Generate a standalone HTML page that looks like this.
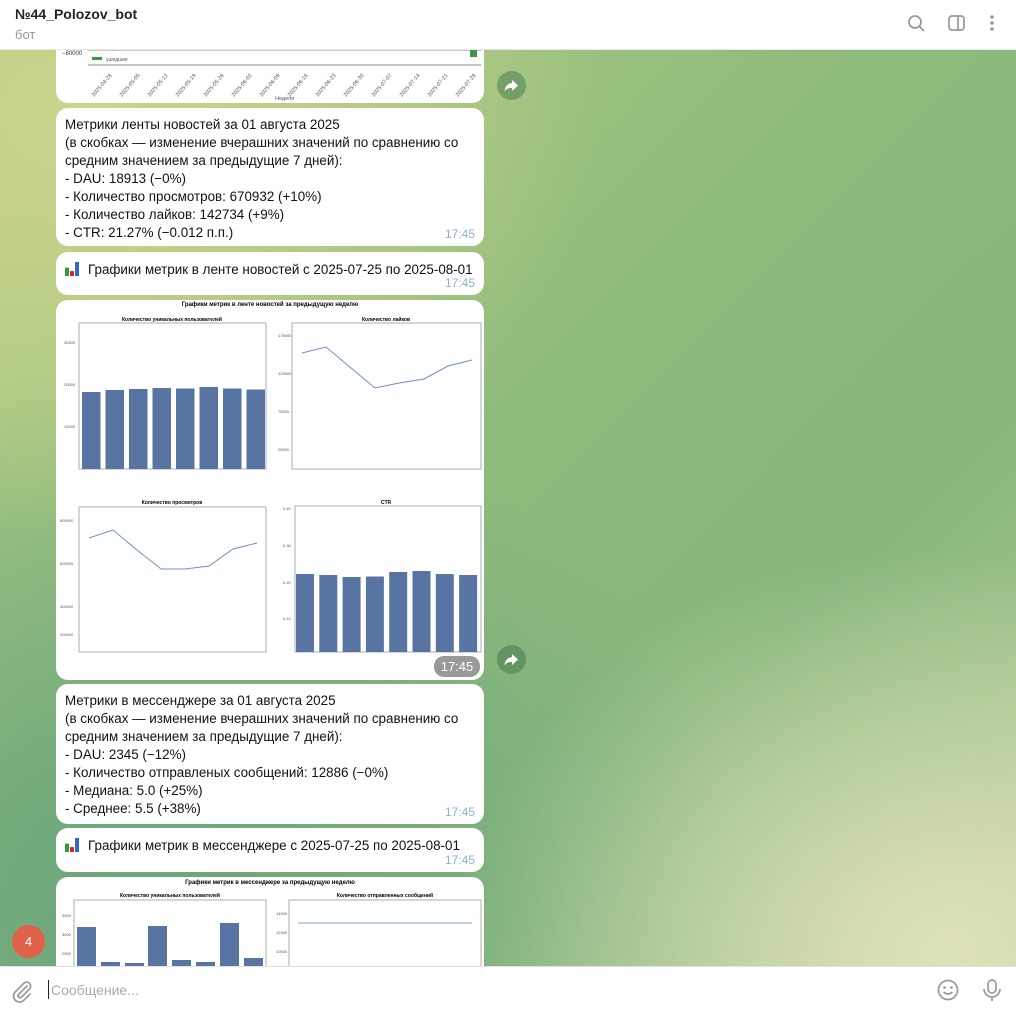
<!DOCTYPE html>
<html><head><meta charset="utf-8"><style>
*{margin:0;padding:0;box-sizing:border-box}
body{width:1016px;height:1011px;overflow:hidden;position:relative;font-family:"Liberation Sans","DejaVu Sans",sans-serif;
background:
radial-gradient(ellipse 520px 420px at 80px 120px,#cbd48c 0%,rgba(203,212,140,0) 100%),
radial-gradient(ellipse 500px 400px at 950px 950px,#dfe2b8 0%,rgba(223,226,184,0) 100%),
radial-gradient(ellipse 600px 500px at 150px 900px,#69a57c 0%,rgba(105,165,124,0) 100%),
linear-gradient(135deg,#b7cf86 0%,#8fbb7c 45%,#88b77c 70%,#b4cc98 100%);}
.hdr{position:absolute;left:0;top:0;width:1016px;height:50px;background:#fff;border-bottom:1px solid #e6e6e6;z-index:5}
.t1{position:absolute;left:15px;top:6px;font-size:14px;font-weight:bold;color:#222}
.t2{position:absolute;left:15px;top:27px;font-size:13px;color:#999}
.b{position:absolute;left:56px;width:428px;background:#fff;border-radius:12px;font-size:13.4px;color:#111;line-height:18px;overflow:hidden}
.tx{padding:8px 10px 0 9px;white-space:nowrap}
.tm{position:absolute;right:9px;bottom:3px;font-size:12px;color:#8fb0c8}
.fw{position:absolute;left:497px;width:29px;height:29px;border-radius:50%;background:rgba(60,110,70,.45)}
.inp{position:absolute;left:0;top:966px;width:1016px;height:45px;background:#fff;border-top:1px solid #e2e2e2;z-index:5}
.ic{display:inline-block;width:14px;height:14px;vertical-align:-2px;margin-right:9px;background:linear-gradient(90deg,#2aa039 0 4px,transparent 4px 5px,#d22 5px 9px,transparent 9px 10px,#2a6ad2 10px);clip-path:polygon(0 40%,33% 40%,33% 65%,66% 65%,66% 0,100% 0,100% 100%,0 100%)}
</style></head><body>
<div class="hdr"><div class="t1">№44_Polozov_bot</div><div class="t2">бот</div>
<svg style="position:absolute;left:900px;top:10px" width="110" height="30" viewBox="900 10 110 30">
<circle cx="915" cy="22" r="6" fill="none" stroke="#999" stroke-width="1.8"/><line x1="919.5" y1="26.5" x2="924" y2="31" stroke="#999" stroke-width="1.8"/>
<rect x="949" y="16" width="15" height="14" rx="3" fill="none" stroke="#999" stroke-width="1.7"/><line x1="958" y1="16" x2="958" y2="30" stroke="#999" stroke-width="1.7"/>
<circle cx="992" cy="17" r="1.8" fill="#999"/><circle cx="992" cy="23" r="1.8" fill="#999"/><circle cx="992" cy="29" r="1.8" fill="#999"/>
</svg></div>

<div class="b" style="top:40px;height:63px">
<svg width="428" height="63" viewBox="56 40 428 63">
<rect x="88" y="40" width="393" height="10" fill="none" stroke="#999" stroke-width="1"/>
<text x="62" y="55" font-size="6" fill="#333">−80000</text>
<rect x="92" y="46" width="10" height="3" fill="#f0883a"/><text x="106" y="50" font-size="5" fill="#555">старые</text>
<rect x="92" y="57" width="10" height="3" fill="#3a9a40"/><text x="106" y="61" font-size="5" fill="#555">ушедшие</text>
<rect x="470" y="50" width="7" height="7" fill="#3a9a40"/>
<line x1="88" y1="65" x2="481" y2="65" stroke="#888"/>
<g font-size="5.5" fill="#555">
<text transform="translate(94,97) rotate(-50)">2025-04-28</text><text transform="translate(122,97) rotate(-50)">2025-05-05</text><text transform="translate(150,97) rotate(-50)">2025-05-12</text><text transform="translate(178,97) rotate(-50)">2025-05-19</text><text transform="translate(206,97) rotate(-50)">2025-05-26</text><text transform="translate(234,97) rotate(-50)">2025-06-02</text><text transform="translate(262,97) rotate(-50)">2025-06-09</text><text transform="translate(290,97) rotate(-50)">2025-06-16</text><text transform="translate(318,97) rotate(-50)">2025-06-23</text><text transform="translate(346,97) rotate(-50)">2025-06-30</text><text transform="translate(374,97) rotate(-50)">2025-07-07</text><text transform="translate(402,97) rotate(-50)">2025-07-14</text><text transform="translate(430,97) rotate(-50)">2025-07-21</text><text transform="translate(458,97) rotate(-50)">2025-07-28</text>
<text x="275" y="100">Неделя</text></g></svg></div>
<div class="fw" style="top:71px"><svg width="29" height="29" viewBox="0 0 29 29"><path d="M15 9 L21 14.5 L15 20 V17 C11 17 9 18 7.5 20.5 C8 15.5 10.5 12.5 15 12 Z" fill="#fff"/></svg></div>

<div class="b" style="top:108px;height:138px"><div class="tx">Метрики ленты новостей за 01 августа 2025<br>(в скобках — изменение вчерашних значений по сравнению со<br>средним значением за предыдущие 7 дней):<br>- DAU: 18913 (−0%)<br>- Количество просмотров: 670932 (+10%)<br>- Количество лайков: 142734 (+9%)<br>- CTR: 21.27% (−0.012 п.п.)</div><div class="tm">17:45</div></div>

<div class="b" style="top:252px;height:43px"><div class="tx" style="padding-top:9px"><span class="ic"></span>Графики метрик в ленте новостей с 2025-07-25 по 2025-08-01</div><div class="tm">17:45</div></div>

<div class="b" style="top:300px;height:380px">
<svg width="428" height="380" viewBox="56 300 428 380">
<text x="270" y="306" font-size="6" font-weight="bold" text-anchor="middle">Графики метрик в ленте новостей за предыдущую неделю</text>
<g font-size="5" font-weight="bold" text-anchor="middle"><text x="172" y="321">Количество уникальных пользователей</text><text x="386" y="321">Количество лайков</text><text x="172" y="504">Количество просмотров</text><text x="386" y="504">CTR</text></g>
<g fill="none" stroke="#999" stroke-width=".8"><rect x="79" y="323" width="187" height="146"/><rect x="292" y="323" width="189" height="146"/><rect x="79" y="507" width="187" height="145"/><rect x="295" y="506" width="186" height="146"/></g>
<g fill="#5874a3"><rect x="82" y="392" width="18.5" height="77"/><rect x="105.5" y="390" width="18.5" height="79"/><rect x="129" y="389" width="18.5" height="80"/><rect x="152.5" y="388" width="18.5" height="81"/><rect x="176" y="388.5" width="18.5" height="80.5"/><rect x="199.5" y="387" width="18.5" height="82"/><rect x="223" y="388.5" width="18.5" height="80.5"/><rect x="246.5" y="389.5" width="18.5" height="79.5"/>
<rect x="296" y="574" width="18" height="78"/><rect x="319.3" y="575" width="18" height="77"/><rect x="342.6" y="577" width="18" height="75"/><rect x="365.9" y="576.5" width="18" height="75.5"/><rect x="389.2" y="572" width="18" height="80"/><rect x="412.5" y="571" width="18" height="81"/><rect x="435.8" y="574" width="18" height="78"/><rect x="459.1" y="575" width="18" height="77"/></g>
<polyline points="302,353 326,347 351,368 375,388 399,383 424,379 448,366 472,360" fill="none" stroke="#6f8fc8" stroke-width="1"/>
<polyline points="89,538 113,530 137,550 161,569 185,569 209,566 233,549 257,543" fill="none" stroke="#6f8fc8" stroke-width="1"/>
<g font-size="4" fill="#555"><text x="64" y="344">30000</text><text x="64" y="386">20000</text><text x="64" y="428">10000</text><text x="278" y="337">175000</text><text x="278" y="375">125000</text><text x="278" y="413">75000</text><text x="278" y="451">25000</text><text x="60" y="522">800000</text><text x="60" y="565">600000</text><text x="60" y="608">400000</text><text x="60" y="636">200000</text><text x="283" y="510">0.40</text><text x="283" y="547">0.30</text><text x="283" y="584">0.20</text><text x="283" y="620">0.10</text></g>
<rect x="434" y="656" width="46" height="21" rx="10" fill="rgba(0,0,0,.4)"/><text x="457" y="671" font-size="13" fill="#fff" text-anchor="middle">17:45</text>
</svg></div>
<div class="fw" style="top:645px"><svg width="29" height="29" viewBox="0 0 29 29"><path d="M15 9 L21 14.5 L15 20 V17 C11 17 9 18 7.5 20.5 C8 15.5 10.5 12.5 15 12 Z" fill="#fff"/></svg></div>

<div class="b" style="top:684px;height:140px"><div class="tx">Метрики в мессенджере за 01 августа 2025<br>(в скобках — изменение вчерашних значений по сравнению со<br>средним значением за предыдущие 7 дней):<br>- DAU: 2345 (−12%)<br>- Количество отправленых сообщений: 12886 (−0%)<br>- Медиана: 5.0 (+25%)<br>- Среднее: 5.5 (+38%)</div><div class="tm">17:45</div></div>

<div class="b" style="top:828px;height:44px"><div class="tx" style="padding-top:9px"><span class="ic"></span>Графики метрик в мессенджере с 2025-07-25 по 2025-08-01</div><div class="tm">17:45</div></div>

<div class="b" style="top:877px;height:110px">
<svg width="428" height="110" viewBox="56 877 428 110">
<text x="270" y="884" font-size="6" font-weight="bold" text-anchor="middle">Графики метрик в мессенджере за предыдущую неделю</text>
<g font-size="5" font-weight="bold" text-anchor="middle"><text x="170" y="897">Количество уникальных пользователей</text><text x="385" y="897">Количество отправленных сообщений</text></g>
<g fill="none" stroke="#999" stroke-width=".8"><rect x="74" y="900" width="192" height="90"/><rect x="289" y="900" width="192" height="90"/></g>
<g fill="#5874a3"><rect x="77" y="927" width="19" height="60"/><rect x="101" y="962" width="19" height="30"/><rect x="125" y="963" width="19" height="30"/><rect x="148" y="926" width="19" height="60"/><rect x="172" y="960" width="19" height="30"/><rect x="196" y="962" width="19" height="30"/><rect x="220" y="923" width="19" height="60"/><rect x="244" y="958" width="19" height="30"/></g>
<line x1="298" y1="923" x2="472" y2="923" stroke="#8aa0c8" stroke-width="1"/>
<g font-size="4" fill="#555"><text x="62" y="917">3500</text><text x="62" y="936">3000</text><text x="62" y="955">2500</text><text x="276" y="915">14000</text><text x="276" y="934">12000</text><text x="276" y="953">10000</text></g>
</svg></div>

<div style="position:absolute;left:12px;top:925px;width:33px;height:33px;border-radius:50%;background:#e2614a;color:#fff;font-size:13px;text-align:center;line-height:33px">4</div>

<div class="inp">
<svg style="position:absolute;left:10px;top:12px" width="24" height="24" viewBox="0 0 24 24"><path d="M17 7 L8.5 15.5 a2 2 0 0 0 2.8 2.8 L19.5 10 a4 4 0 0 0 -5.7 -5.7 L5.3 12.8 a6 6 0 0 0 8.5 8.5 L20 15" fill="none" stroke="#999" stroke-width="1.7" stroke-linecap="round"/></svg>
<div style="position:absolute;left:48px;top:13px;width:1px;height:19px;background:#222"></div>
<div style="position:absolute;left:51px;top:15px;font-size:14px;color:#aaa">Сообщение...</div>
<svg style="position:absolute;left:935px;top:11px" width="70" height="24" viewBox="0 0 70 24"><circle cx="13" cy="12" r="9.5" fill="none" stroke="#999" stroke-width="1.7"/><circle cx="9.5" cy="9.5" r="1.3" fill="#999"/><circle cx="16.5" cy="9.5" r="1.3" fill="#999"/><path d="M8.5 14 q4.5 4 9 0" fill="none" stroke="#999" stroke-width="1.6"/>
<rect x="53" y="2" width="8" height="13" rx="4" fill="none" stroke="#999" stroke-width="1.7"/><path d="M49 11 a8 8 0 0 0 16 0 M57 19 v4" fill="none" stroke="#999" stroke-width="1.7"/></svg>
</div>
</body></html>
